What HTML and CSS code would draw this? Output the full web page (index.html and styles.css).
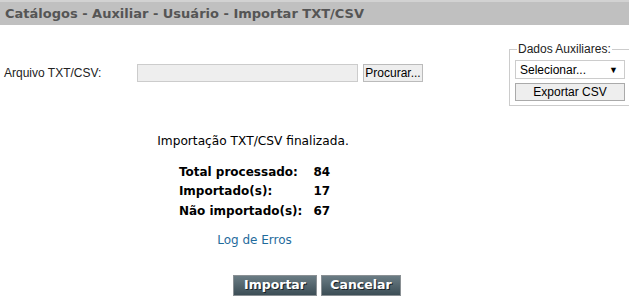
FILE: index.html
```html
<!DOCTYPE html>
<html lang="pt">
<head>
<meta charset="utf-8">
<title>Importar TXT/CSV</title>
<link rel="stylesheet" href="styles.css">
</head>
<body>
<div class="header">Catálogos - Auxiliar - Usuário - Importar TXT/CSV</div>
<div class="top">
  <div class="main">
    <div class="file-row">
      <label class="file-label">Arquivo TXT/CSV:</label>
      <div class="file-box"></div>
      <button class="btn-light browse">Procurar...</button>
    </div>
    <div class="result">
      <p class="msg">Importação TXT/CSV finalizada.</p>
      <table class="stats">
        <tr><td>Total processado:</td><td>84</td></tr>
        <tr><td>Importado(s):</td><td>17</td></tr>
        <tr><td>Não importado(s):</td><td>67</td></tr>
      </table>
      <a class="log" href="#">Log de Erros</a>
    </div>
  </div>
  <fieldset class="aux">
    <legend>Dados Auxiliares:</legend>
    <div class="select"><span>Selecionar...</span><span class="arrow">▼</span></div>
    <button class="btn-light export">Exportar CSV</button>
  </fieldset>
</div>
<div class="actions">
  <button class="btn-dark">Importar</button>
  <button class="btn-dark">Cancelar</button>
</div>
</body>
</html>
```
FILE: styles.css
```css
html, body {
  margin: 0;
  padding: 0;
  background: #fff;
  overflow: hidden;
}
body {
  width: 629px;
  height: 307px;
  font-family: "DejaVu Sans", Verdana, sans-serif;
  color: #000;
}
.header {
  height: 25px;
  box-sizing: border-box;
  background: #c0c0c0;
  border-top: 2px solid #d2d2d2;
  padding: 3px 0 0 5px;
  font-size: 13px;
  font-weight: bold;
  color: #555;
  line-height: 17px;
}
.top {
  display: flex;
  align-items: flex-start;
}
.main {
  width: 506px;
  flex-shrink: 0;
}
.file-row {
  display: flex;
  align-items: center;
  margin-top: 39px;
  height: 18px;
}
.file-label {
  font-family: "Liberation Sans", Arial, sans-serif;
  font-size: 12px;
  color: #222;
  width: 133px;
  padding-left: 4px;
}
.file-box {
  width: 219px;
  height: 16px;
  background: #eee;
  border: 1px solid #ccc;
}
.btn-light {
  font-family: "Liberation Sans", Arial, sans-serif;
  font-size: 12px;
  color: #000;
  background: #eee;
  border: 1px solid #bbb;
  padding: 0;
  margin: 0;
  box-sizing: border-box;
}
.browse {
  margin-left: 5px;
  width: 60px;
  height: 18px;
  line-height: 15px;
}
.result {
  display: flex;
  flex-direction: column;
  align-items: center;
}
.msg {
  margin: 52px 0 0;
  font-size: 12.2px;
  line-height: 15px;
  color: #000;
}
.stats {
  border-collapse: collapse;
  margin-top: 13px;
  margin-left: 3px;
  font-size: 12px;
  font-weight: bold;
}
.stats td {
  padding: 0;
  height: 19.5px;
}
.stats td:first-child {
  padding-right: 11px;
}
.log {
  margin-top: 12px;
  font-size: 12px;
  color: #1f6b9c;
  text-decoration: none;
  line-height: 15px;
  padding-left: 3px;
}
.aux {
  flex-shrink: 0;
  margin: 17px 0 0 3px;
  padding: 4px 5px 10px 5px;
  border: 1px solid #ccc;
  border-right: none;
  width: 114px;
  height: 48px;
}
.aux legend {
  font-family: "Liberation Sans", Arial, sans-serif;
  font-size: 12px;
  color: #222;
  padding: 0 1px;
  margin-left: 2px;
}
.select {
  display: flex;
  justify-content: space-between;
  align-items: center;
  width: 110px;
  height: 19px;
  box-sizing: border-box;
  border: 1px solid #ccc;
  padding: 0 6px 0 4px;
  font-family: "Liberation Sans", Arial, sans-serif;
  font-size: 12px;
  color: #000;
}
.arrow {
  font-size: 9px;
}
.export {
  display: block;
  margin-top: 4px;
  width: 110px;
  height: 18px;
  border-color: #aaa;
}
.actions {
  display: flex;
  justify-content: center;
  gap: 4px;
  margin-top: 27px;
  padding-left: 5px;
}
.btn-dark {
  height: 21px;
  box-sizing: border-box;
  border: 1px solid #8a9094;
  background: linear-gradient(#6a7c84, #3c4e56);
  color: #fff;
  font-family: "DejaVu Sans", Verdana, sans-serif;
  font-weight: bold;
  font-size: 12.5px;
  padding: 0;
  line-height: 18px;
  text-shadow: 1px 1px 0 #1a2226;
}
.btn-dark:first-child { width: 84px; }
.btn-dark:last-child { width: 80px; }
```
